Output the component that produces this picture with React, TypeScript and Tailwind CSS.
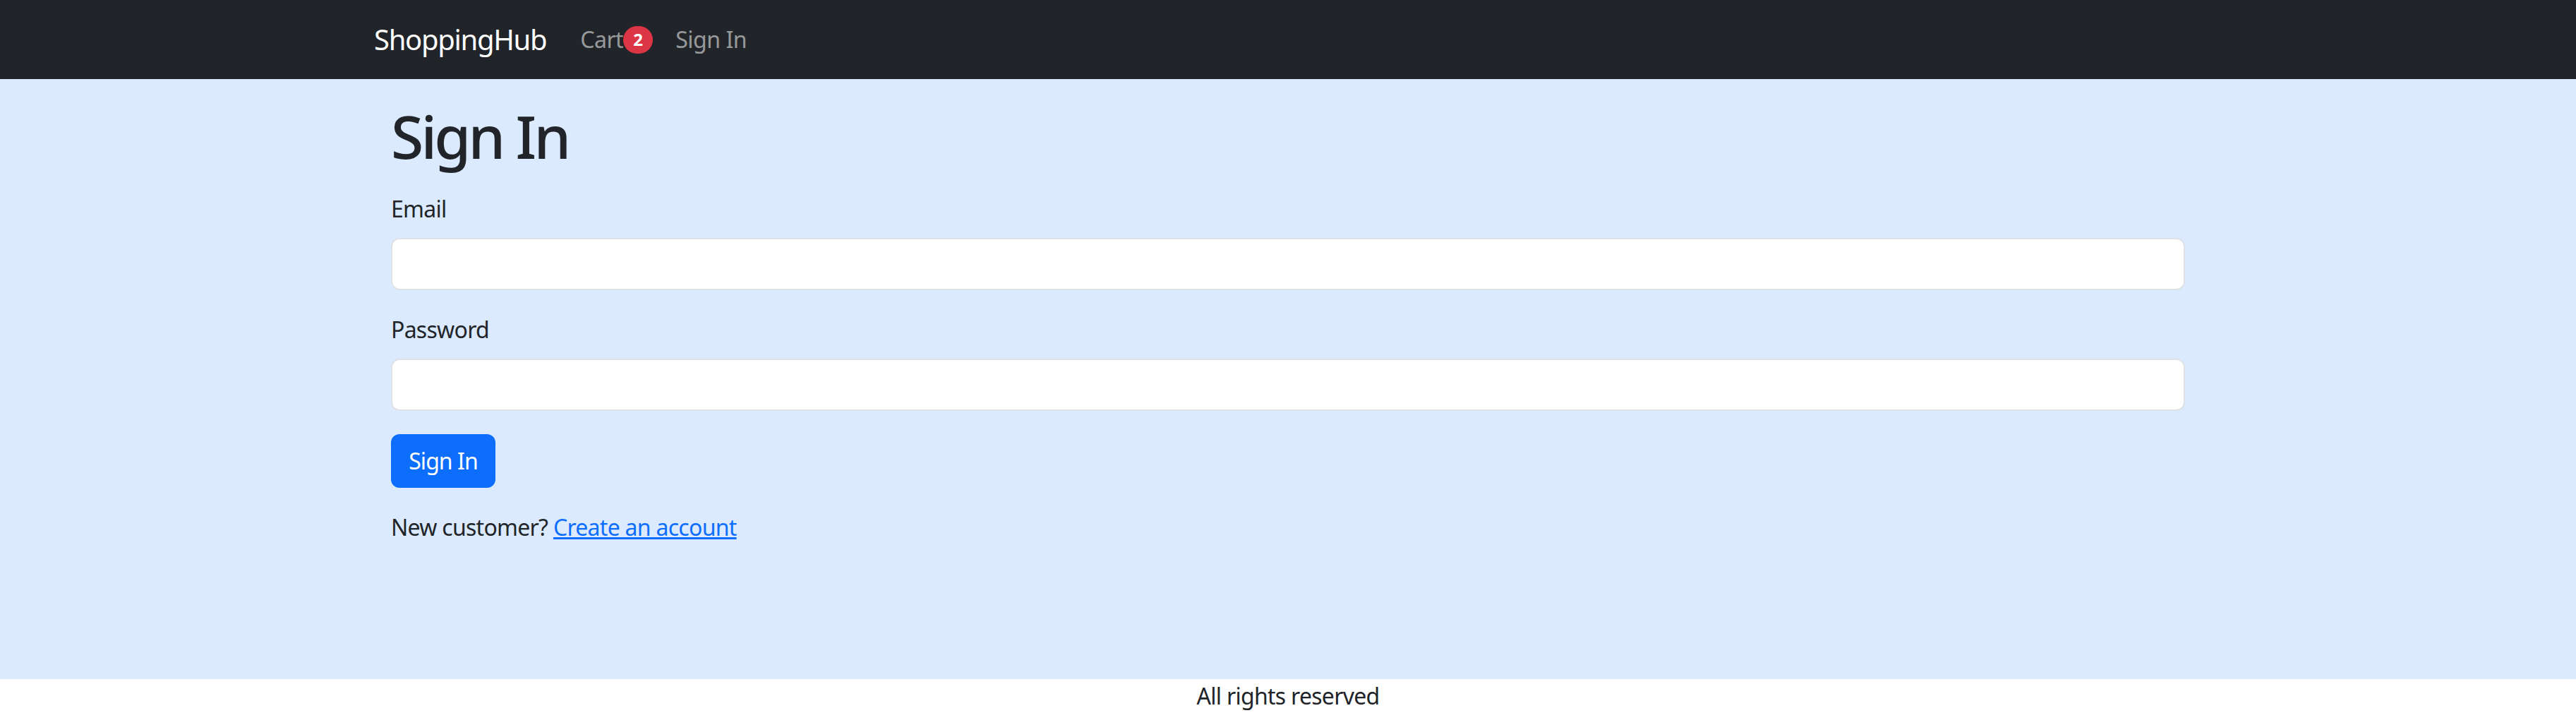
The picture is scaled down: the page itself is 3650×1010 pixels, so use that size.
import React from "react";

const font = { fontFamily: '"Noto Sans", "Open Sans", sans-serif' };

function Navbar() {
    return (
        <nav className="h-[112px] bg-[#212529] tracking-[-0.03em]">
            <div className="mx-auto flex h-full w-[2590px] items-center">
                <a href="#" className="mr-[32px] text-[40px] leading-[60px] tracking-[-0.033em] text-white">
                    ShoppingHub
                </a>
                <ul className="flex items-center">
                    <li>
                        <a href="#" className="flex items-center px-[16px] text-[32px] leading-[48px] text-[rgba(255,255,255,0.55)]">
                            Cart
                            <span className="flex h-[39px] w-[42px] items-center justify-center rounded-full bg-[#dc3545] text-[24px] font-bold leading-none tracking-normal text-white">
                                2
                            </span>
                        </a>
                    </li>
                    <li>
                        <a href="#" className="px-[16px] text-[32px] leading-[48px] text-[rgba(255,255,255,0.55)]">
                            Sign In
                        </a>
                    </li>
                </ul>
            </div>
        </nav>
    );
}

function Field({ label, type }: { label: string; type: string }) {
    return (
        <div>
            <label className="mb-[17px] block text-[32px] leading-[48px]">{label}</label>
            <input
                type={type}
                className="block h-[74px] w-full rounded-[12px] border-2 border-[#dee2e6] bg-white px-[24px] text-[32px] outline-none"
            />
        </div>
    );
}

export default function App() {
    return (
        <div style={font} className="tracking-[-0.045em] text-[#212529]">
            <Navbar />
            <main className="h-[850px] bg-[#dbeafe] pt-[30px]">
                <div className="mx-auto w-[2542px]">
                    <h1 className="mb-[29px] text-[84px] font-medium leading-[101px] tracking-[-0.045em]">Sign In</h1>
                    <form onSubmit={(e) => e.preventDefault()}>
                        <div className="mb-[32px]">
                            <Field label="Email" type="email" />
                        </div>
                        <div className="mb-[33px]">
                            <Field label="Password" type="password" />
                        </div>
                        <button
                            type="submit"
                            className="flex h-[76px] w-[148px] items-center justify-center rounded-[12px] bg-[#0d6efd] text-[32px] leading-[48px] tracking-[-0.03em] text-white"
                        >
                            Sign In
                        </button>
                    </form>
                    <p className="mt-[32px] text-[32px] leading-[48px]">
                        New customer?{" "}
                        <a href="#" className="text-[#0d6efd] underline">
                            Create an account
                        </a>
                    </p>
                </div>
            </main>
            <footer className="bg-white text-center text-[32px] leading-[48px]">All rights reserved</footer>
        </div>
    );
}
